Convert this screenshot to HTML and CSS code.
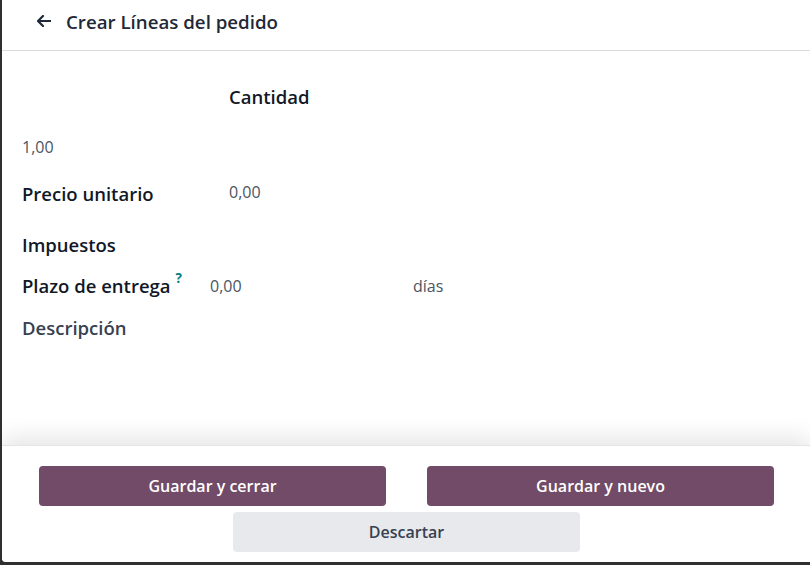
FILE: index.html
```html
<!DOCTYPE html>
<html lang="es">
<head>
<meta charset="utf-8">
<title>Crear Líneas del pedido</title>
<link rel="stylesheet" href="styles.css">
</head>
<body>
<div class="modal">
  <header class="modal-header">
    <button class="back" aria-label="Atrás">
      <svg width="14" height="12" viewBox="0 0 14 12"><path d="M6 1 1 6l5 5M1.5 6H13.5" fill="none" stroke="#1f2937" stroke-width="2.2" stroke-linecap="round" stroke-linejoin="round"/></svg>
    </button>
    <h1 class="title">Crear Líneas del pedido</h1>
  </header>
  <main class="modal-body">
    <div class="row r1"><span class="label"></span><span class="col-head">Cantidad</span></div>
    <div class="row r2"><span class="value">1,00</span></div>
    <div class="row r3"><span class="label">Precio unitario</span><span class="value">0,00</span></div>
    <div class="row r4"><span class="label">Impuestos</span></div>
    <div class="row r5"><span class="label short">Plazo de entrega<sup class="help">?</sup></span><span class="value w-days">0,00</span><span class="value">días</span></div>
    <div class="row r6"><span class="label muted">Descripción</span></div>
  </main>
  <footer class="modal-footer">
    <div class="btn-row">
      <button class="btn primary">Guardar y cerrar</button>
      <button class="btn primary">Guardar y nuevo</button>
    </div>
    <button class="btn secondary">Descartar</button>
  </footer>
</div>
</body>
</html>
```
FILE: styles.css
```css
* { box-sizing: border-box; }
html, body { margin: 0; height: 100%; }
body {
  background: #2f2f2f;
  font-family: "Open Sans", "Noto Sans", sans-serif;
  color: #111827;
}
.modal {
  margin-left: 2px;
  height: 562px;
  background: #fff;
  display: flex;
  flex-direction: column;
  border-bottom-left-radius: 4px;
  overflow: hidden;
}
.modal-header {
  height: 51px;
  flex: none;
  display: flex;
  align-items: center;
  border-bottom: 1px solid #dcdcdc;
  padding: 0 0 8px 35px;
}
.back {
  border: 0;
  background: none;
  padding: 0;
  margin: 0 15px 0 0;
  display: flex;
  align-items: center;
  height: 16px;
}
.title {
  margin: 0;
  font-size: 18.7px;
  font-weight: 600;
  color: #1f2937;
}
.modal-body {
  flex: 1;
  padding: 33px 20px 0;
  display: flex;
  flex-direction: column;
}
.row {
  display: flex;
  align-items: center;
  height: 24px;
}
.r2 { margin-top: 26px; }
.r3 { margin-top: 23px; }
.r4 { margin-top: 27px; }
.r5 { margin-top: 17px; }
.r6 { margin-top: 18px; }
.r2 .value { position: relative; top: 1px; }
.label {
  width: 207px;
  font-weight: 600;
  font-size: 18.5px;
  color: #111827;
}
.label.short { width: 188px; }
.label.muted { color: #374151; }
.col-head {
  font-weight: 600;
  font-size: 18.5px;
  color: #111827;
}
.value {
  color: #4b5563;
  font-size: 16px;
}
.r3 .value { position: relative; top: -1px; }
.r5 .value { position: relative; top: 1px; }
.w-days { width: 203px; }
.help {
  color: #017e84;
  font-size: 13.5px;
  font-weight: 700;
  margin-left: 5px;
  position: relative;
  top: -3px;
}
.modal-footer {
  flex: none;
  position: relative;
  background: #fff;
  border-top: 1px solid #e5e5e5;
  box-shadow: 0 -8px 22px rgba(0,0,0,0.10);
  padding: 20px 36px 10px 37px;
  display: flex;
  flex-direction: column;
  align-items: center;
  gap: 6px;
}
.btn-row {
  display: flex;
  justify-content: space-between;
  width: 100%;
}
.btn {
  width: 347px;
  height: 40px;
  border: 0;
  border-radius: 4px;
  font-family: "Open Sans", "Noto Sans", sans-serif;
  font-size: 16px;
  font-weight: 600;
}
.primary { background: #714b67; color: #fff; }
.secondary { background: #e7e9ed; color: #374151; }
```
